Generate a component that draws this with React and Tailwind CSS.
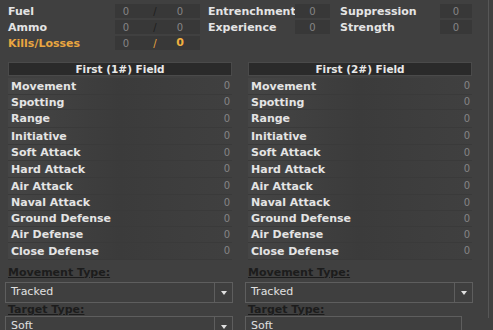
import React from "react";

const font = { fontFamily: '"DejaVu Sans", sans-serif' };

const stats = [
  ["Movement", 17],
  ["Spotting", 15],
  ["Range", 18],
  ["Initiative", 17],
  ["Soft Attack", 16],
  ["Hard Attack", 17],
  ["Air Attack", 17],
  ["Naval Attack", 16],
  ["Ground Defense", 16],
  ["Air Defense", 16],
  ["Close Defense", 17],
];

function Band({ children, className = "" }) {
  return (
    <div className={"h-[14px] flex items-center bg-[#383838] " + className}>
      {children}
    </div>
  );
}

function FieldColumn({ title }) {
  return (
    <div className="w-[224px] flex flex-col">
      <div className="h-[14px] bg-[#2a2a2a] border border-[#4a4a4a] flex items-center justify-center text-[10.5px] font-bold text-[#e8e8e8] leading-none">
        {title}
      </div>
      <div className="flex flex-col mt-[2px]">
        {stats.map(([s, h]) => (
          <div
            key={s}
            style={{ height: h }}
            className="flex items-center justify-between pl-[3px] pr-[2px] bg-gradient-to-r from-[#454545] via-[#3b3b3b] to-[#404040] border-b border-[#3a3a3a]"
          >
            <span className="text-[11px] font-bold text-[#e4e4e4] leading-none">{s}</span>
            <span className="text-[10px] text-[#858585] leading-none">0</span>
          </div>
        ))}
      </div>
    </div>
  );
}

function Select({ value, arrow = true, width = "w-[228px]" }) {
  return (
    <div className={width + " h-[21px] border border-[#5e5e5e] flex bg-[#3f3f3f]"}>
      <div className="flex-1 flex items-center pl-[5px] text-[11px] text-[#e0e0e0]">
        {value}
      </div>
      {arrow && (
        <div className="w-[18px] border-l border-[#5e5e5e] flex items-center justify-center">
          <svg width="6" height="4" viewBox="0 0 6 4">
            <path d="M0 0 L6 0 L3 4 Z" fill="#e0e0e0" />
          </svg>
        </div>
      )}
    </div>
  );
}

export default function App() {
  return (
    <div className="w-[493px] h-[330px] bg-[#404040] overflow-hidden relative" style={font}>
      <div className="absolute left-[488px] top-0 w-px h-[318px] bg-[#575757]" />
      {/* Top section */}
      <div className="pt-[4px] flex flex-col gap-[2px]">
        {[
          ["Fuel", "Entrenchment", "Suppression"],
          ["Ammo", "Experience", "Strength"],
          ["Kills/Losses", null, null],
        ].map(([a, b, c], i) => {
          const orange = i === 2;
          return (
            <div key={a} className="flex h-[14px] items-center">
              <div className={"w-[115px] pl-[8px] text-[11px] font-bold leading-none " + (orange ? "text-[#e9a640]" : "text-[#e4e4e4]")}>
                {a}
              </div>
              <Band className="w-[85px] text-[10px]">
                <span className="w-[22px] text-center text-[#858585]">0</span>
                <span className={"w-[36px] text-center " + (orange ? "text-[#e9a640]" : "text-[#1e1e1e]")}>/</span>
                <span className={"w-[14px] text-center " + (orange ? "text-[#f0b040] font-bold text-[11px]" : "text-[#858585]")}>0</span>
              </Band>
              {b ? (
                <>
                  <div className="w-[95px] pl-[8px] text-[11px] font-bold text-[#e4e4e4] leading-none whitespace-nowrap">{b}</div>
                  <Band className="w-[35px] justify-center text-[10px] text-[#858585]">0</Band>
                  <div className="w-[110px] pl-[10px] text-[11px] font-bold text-[#e4e4e4] leading-none">{c}</div>
                  <Band className="w-[32px] justify-center text-[10px] text-[#858585]">0</Band>
                </>
              ) : null}
            </div>
          );
        })}
      </div>

      {/* Fields */}
      <div className="mt-[12px] pl-[8px] flex gap-[16px]">
        <FieldColumn title="First (1#) Field" />
        <FieldColumn title="First (2#) Field" />
      </div>

      {/* Bottom */}
      <div className="mt-[4px] pl-[5px] flex gap-[12px]">
        {[0, 1].map((k) => (
          <div key={k} className="flex flex-col">
            <div className="pl-[3px] h-[16px] text-[11px] font-bold text-[#1c1c1c] underline leading-none flex items-center">
              Movement Type:
            </div>
            <div className="mt-[2px]">
              <Select value="Tracked" />
            </div>
            <div className="pl-[3px] h-[13px] text-[11px] font-bold text-[#1c1c1c] underline leading-none flex items-center">
              Target Type:
            </div>
            <div>
              <Select value="Soft" arrow={k === 0} width={k === 0 ? "w-[228px]" : "w-[217px]"} />
            </div>
          </div>
        ))}
      </div>
    </div>
  );
}
